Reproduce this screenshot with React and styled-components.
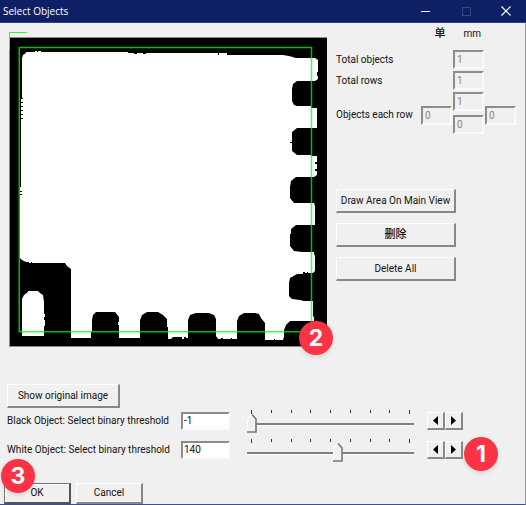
import React, { useState } from "react";
import styled, { createGlobalStyle, css } from "styled-components";

const GlobalStyle = createGlobalStyle`
  * { box-sizing: border-box; }
  body {
    margin: 0;
    background: #f0f0f0;
    color: #111;
    font-family: Roboto, "Noto Sans CJK SC", sans-serif;
    font-size: 10px;
    line-height: 14px;
  }
  button, input { font: inherit; color: inherit; margin: 0; }
`;

const Dialog = styled.div`
  display: flex;
  flex-direction: column;
  min-height: 100vh;
  border-right: 1px solid #8a93c0;
  border-bottom: 1px solid #3f4f96;
`;

const TitleBar = styled.header`
  display: flex;
  align-items: center;
  height: 23px;
  padding-left: 3px;
  margin-right: -1px;
  background: #0f1f66;
  border-bottom: 1px solid #34427f;
  color: #fff;
`;

const Title = styled.h1`
  flex: 1;
  margin: 0;
  font: 400 10px/22px "Open Sans", sans-serif;
`;

const CaptionButton = styled.button`
  display: flex;
  align-items: center;
  justify-content: center;
  width: 40px;
  height: 22px;
  padding: 0;
  border: 0;
  background: none;
  color: #fff;

  &:disabled { color: #3b4783; }
`;

const Upper = styled.div`
  display: flex;
  gap: 9px;
  padding: 8px 9px 0;
`;

const View = styled.div`
  position: relative;
  flex: none;

  svg { display: block; }
`;

const Side = styled.div`
  flex: 1;
`;

const Units = styled.div`
  display: flex;
  justify-content: flex-end;
  gap: 18px;
  padding: 0 35px 0 0;
  height: 23px;
  margin-top: -4px;
`;

const Han = styled.span`
  font-size: 11px;
  font-weight: 500;
`;

const Field = styled.div`
  display: flex;
  align-items: center;
  justify-content: space-between;
  padding-right: ${(p) => (p.$wide ? 0 : 32)}px;
  margin-bottom: 2px;
`;

const sunken = css`
  border: 2px solid;
  border-color: #8c8c8c #fafafa #fafafa #8c8c8c;
  border-radius: 0;
  outline: 0;
`;

const CountInput = styled.input`
  ${sunken}
  display: block;
  width: 31px;
  height: 19px;
  padding: 0 2px;
  background: #f0f0f0;

  &:disabled { color: #858585; }
`;

const Cluster = styled.div`
  display: grid;
  grid-template-columns: repeat(3, 31px);
  column-gap: 1px;
  align-items: center;
`;

const Stack = styled.div`
  display: grid;
  gap: 4px;
  margin-bottom: 4px;
`;

const Sides = styled.div`
  padding-top: 1px;
`;

const Actions = styled.div`
  display: grid;
  gap: 10px;
  width: 120px;
  margin-top: 51px;
`;

const PushButton = styled.button`
  display: block;
  height: ${(p) => p.$h || 24}px;
  min-width: ${(p) => p.$w || 67}px;
  padding: 0 2px;
  border: solid;
  border-width: 1px 2px 2px 1px;
  border-color: #fff #888 #888 #fff;
  border-radius: 0;
  background: #f0f0f0;
  white-space: nowrap;
  ${(p) => p.$default && css`
    border-color: #777 #555 #555 #777;
    box-shadow: inset 1px 1px 0 #fff;
  `}
`;

const Lower = styled.div`
  padding: 37px 62px 0 7px;
`;

const Thresholds = styled.div`
  display: grid;
  grid-template-columns: 174px 49px minmax(120px, 1fr) auto;
  align-items: center;
  grid-auto-rows: 29px;
  margin-top: -2px;
`;

const ThresholdInput = styled.input`
  ${sunken}
  width: 49px;
  height: 18px;
  padding: 0 1px;
  background: #fff;
`;

const SliderBox = styled.div`
  align-self: end;
  margin: 0 13px 0 17px;
  height: 25px;
`;

const Ticks = styled.div`
  display: flex;
  justify-content: space-between;
  padding: 0 4px;
  height: 4px;
`;

const Tick = styled.span`
  width: 1px;
  height: 3px;
  background: #333;

  &:first-child, &:last-child { height: 4px; }
`;

const thumb = encodeURIComponent(
  '<svg xmlns="http://www.w3.org/2000/svg" width="10" height="19"><path d="M.5 18V5L5 .5 9 5V18Z" fill="#f0f0f0"/><path d="M.5 18V5L5 .5" fill="none" stroke="#fff"/><path d="M5 .5L9 5V18H0" fill="none" stroke="#777" stroke-width="1.6"/></svg>'
);

const Range = styled.input`
  appearance: none;
  display: block;
  width: 100%;
  height: 19px;
  background: linear-gradient(#808080, #808080) 0 9px / 100% 2px no-repeat,
    linear-gradient(#fff, #fff) 0 11px / 100% 1px no-repeat;

  &::-webkit-slider-thumb {
    appearance: none;
    width: 10px;
    height: 19px;
    background: url("data:image/svg+xml,${thumb}");
  }
`;

const Stepper = styled.div`
  position: relative;
  display: flex;
`;

const StepButton = styled.button`
  display: flex;
  align-items: center;
  justify-content: center;
  width: 18px;
  height: 18px;
  padding: 0;
  border: solid;
  border-width: 1px 2px 2px 1px;
  border-color: #fff #888 #888 #fff;
  background: #f0f0f0;
`;

const Footer = styled.footer`
  position: relative;
  display: flex;
  gap: 5px;
  margin-top: auto;
  padding-left: 4px;
`;

const Badge = styled.span`
  position: absolute;
  left: ${(p) => p.$left}px;
  top: ${(p) => p.$top}px;
  width: 34px;
  height: 34px;
  border-radius: 50%;
  background: #fb3344;
  box-shadow: 0 2px 4px rgba(0, 0, 0, 0.12);
  color: #fff;
  font: 700 23px/34px Inter, sans-serif;
  text-align: center;
`;

const WHITE_AREA =
  "M22 97V58L23 55L26 53V52H35V51H37V52H38V51H41V52H128V53H134V54H137V53H143V54H146V53H218V55H219V53H227V55H283L289 56L296 58H315L318 60V72H317V76H318V79L315 81H297L293 84L292 89V101L294 105L297 106H311V108H317V128H297L292 132V142H290V143H292V151L297 155H311V156H317V162H315V164H317V169H315V171H317V175L314 177H296L291 181L290 187V198L294 203H314L315 206V225H296L291 229V234H290V246L294 251L302 252H314V254L315 256V271L313 273H308V272H307V273H305V272H303V274H297L290 278L289 283V296L292 299L300 300L304 301H313V316L314 317V321H290L286 325L284 330V337L283 340H275V339H274V340H265V323L261 318L259 314L255 313H244L239 316L237 321V339H232V338H231V339H223V338H221V339H218L216 336V319L214 315L209 313H196L190 315L188 320V338H186V337H184V339H182V337H173L171 339H168V327H167V319L163 315L158 312H147L142 315L140 320V338H119V325H118V322H119V317L115 312H96L93 315L92 320V332H91V338H71V269L67 266L65 263H32V262H31V263H29V262H26L22 260L20 258V195H22V194H20V192H22V191H20V187H21V119H23V118H21V115H23V114H21V111H23V110H21V107H23V106H21V103H23V102H21V99H23Z";

function BinaryView() {
  return (
    <svg width="318" height="316" viewBox="9 31 318 316" role="img" aria-label="Binary image">
      <rect x="9" y="37" width="318" height="310" fill="#8b8b8b" />
      <rect x="10" y="38" width="317" height="308" fill="#000" />
      <path d={WHITE_AREA} fill="#fff" />
      <path d="M22 336V299L24 295L28 292V291H38L40 293L43 295L44 302V314H45V317H44V320H45V326H44V336Z" fill="#fff" />
      <path d="M9 50V32H27V33H10V50Z" fill="#2cff2c" />
      <rect x="19.250" y="47.500" width="292.250" height="284.250" fill="none" stroke="#0f0" strokeWidth="1.500" strokeOpacity="0.750" />
    </svg>
  );
}

function Threshold({ id, label, initial, marker }) {
  const [value, setValue] = useState(initial);
  const step = (d) => setValue((v) => Math.max(-1, Math.min(255, Number(v) + d)));
  return (
    <>
      <label htmlFor={id}>{label}</label>
      <ThresholdInput id={id} value={value} onChange={(e) => setValue(e.target.value)} />
      <SliderBox>
        <Ticks>
          {Array.from({ length: 9 }, (_, i) => <Tick key={i} />)}
        </Ticks>
        <Range type="range" min="-1" max="255" value={value} aria-label={label} onChange={(e) => setValue(e.target.value)} />
      </SliderBox>
      <Stepper>
        <StepButton aria-label="Decrease" onClick={() => step(-1)}>
          <svg width="5" height="9"><path d="M5 0V9L0 4.500Z" /></svg>
        </StepButton>
        <StepButton aria-label="Increase" onClick={() => step(1)}>
          <svg width="5" height="9"><path d="M0 0V9L5 4.500Z" /></svg>
        </StepButton>
        {marker && <Badge $left={37} $top={-4}>{marker}</Badge>}
      </Stepper>
    </>
  );
}

export default function App() {
  return (
    <Dialog>
      <GlobalStyle />
      <TitleBar>
        <Title>Select Objects</Title>
        <CaptionButton aria-label="Minimize">
          <svg width="10" height="10"><path d="M0 5.500H9" stroke="currentColor" /></svg>
        </CaptionButton>
        <CaptionButton aria-label="Maximize" disabled>
          <svg width="10" height="10"><rect x="1.500" y="1.500" width="8" height="8" fill="none" stroke="currentColor" /></svg>
        </CaptionButton>
        <CaptionButton aria-label="Close">
          <svg width="10" height="10"><path d="M.5.5L9.500 9.500M9.500.5L.5 9.500" stroke="currentColor" strokeWidth="1.200" /></svg>
        </CaptionButton>
      </TitleBar>
      <Upper>
        <View>
          <BinaryView />
          <Badge $left={290} $top={290}>2</Badge>
        </View>
        <Side>
          <Units><Han>单</Han><span>mm</span></Units>
          <Field>
            <label htmlFor="objects">Total objects</label>
            <CountInput id="objects" defaultValue="1" disabled />
          </Field>
          <Field>
            <label htmlFor="rows">Total rows</label>
            <CountInput id="rows" defaultValue="1" disabled />
          </Field>
          <Field $wide>
            <label htmlFor="each">Objects each row</label>
            <Cluster>
              <Sides><CountInput id="each" defaultValue="0" disabled /></Sides>
              <Stack>
                <CountInput aria-label="Objects above" defaultValue="1" disabled />
                <CountInput aria-label="Objects below" defaultValue="0" disabled />
              </Stack>
              <Sides><CountInput aria-label="Objects right" defaultValue="0" disabled /></Sides>
            </Cluster>
          </Field>
          <Actions>
            <PushButton>Draw Area On Main View</PushButton>
            <PushButton><Han>删除</Han></PushButton>
            <PushButton>Delete All</PushButton>
          </Actions>
        </Side>
      </Upper>
      <Lower>
        <PushButton $w={113}>Show original image</PushButton>
        <Thresholds>
          <Threshold id="black" label="Black Object: Select binary threshold" initial={-1} />
          <Threshold id="white" label="White Object: Select binary threshold" initial={140} marker="1" />
        </Thresholds>
      </Lower>
      <Footer>
        <PushButton $default $h={21}>OK</PushButton>
        <PushButton $h={21}>Cancel</PushButton>
        <Badge $left={1} $top={-24}>3</Badge>
      </Footer>
    </Dialog>
  );
}
